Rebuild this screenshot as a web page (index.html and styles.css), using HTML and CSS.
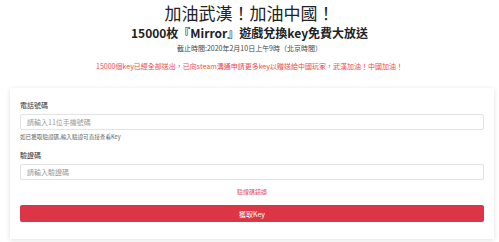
FILE: index.html
```html
<!DOCTYPE html>
<html lang="zh-Hant">
<head>
<meta charset="utf-8">
<title>加油武漢！加油中國！</title>
<link rel="stylesheet" href="styles.css">
</head>
<body>
<header class="head">
  <h1 class="title">加油武漢！加油中國！</h1>
  <h2 class="subtitle">15000枚『Mirror』遊戲兌換key免費大放送</h2>
  <p class="deadline">截止時間:2020年2月10日上午9時（北京時間）</p>
  <p class="notice">15000個key已經全部送出，已向steam溝通申請更多key以贈送給中國玩家，武漢加油！中國加油！</p>
</header>
<main class="card">
  <div class="field">
    <label class="label">電話號碼</label>
    <input class="input" type="text" placeholder="請輸入11位手機號碼">
    <small class="help">如已獲取驗證碼,輸入驗證可直接查看Key</small>
  </div>
  <div class="field">
    <label class="label">驗證碼</label>
    <input class="input" type="text" placeholder="請輸入驗證碼">
  </div>
  <p class="error">驗證碼錯誤</p>
  <button class="btn" type="button">獲取Key</button>
</main>
</body>
</html>
```

FILE: styles.css
```css
* { box-sizing: border-box; }
html, body { margin: 0; padding: 0; background: #fff; }
body {
  font-family: "Noto Sans CJK TC", "Noto Sans", sans-serif;
  color: #333;
  width: 499px;
  height: 242px;
  overflow: hidden;
}
.head {
  display: flex;
  flex-direction: column;
  align-items: center;
  padding-top: 2px;
}
.title {
  margin: 0;
  font-size: 17px;
  line-height: 22px;
  font-weight: 400;
  color: #222;
}
.subtitle {
  margin: 1px 0 0;
  font-size: 12px;
  line-height: 16px;
  font-weight: 700;
  color: #222;
}
.deadline {
  margin: 2px 0 0;
  font-size: 7px;
  line-height: 10px;
  color: #444;
}
.notice {
  margin: 8px 0 0;
  font-size: 7px;
  line-height: 10px;
  color: #ef4b4b;
}
.card {
  margin: 17px 0 0 10px;
  width: 484px;
  height: 151px;
  background: #fff;
  box-shadow: 0 1px 5px rgba(0,0,0,0.12);
  padding: 10px 10px 0;
  display: flex;
  flex-direction: column;
}
.field {
  display: flex;
  flex-direction: column;
}
.label {
  font-size: 7px;
  line-height: 10px;
  margin-top: 2px;
  color: #333;
}
.input {
  margin-top: 4px;
  height: 16px;
  border: 1px solid #e3e3e3;
  border-radius: 2px;
  padding: 0 6px;
  font-family: inherit;
  font-size: 7px;
  color: #333;
  outline: none;
}
.input::placeholder { color: #9a9a9a; }
.help {
  font-size: 5.6px;
  line-height: 8px;
  margin-top: 3px;
  color: #666;
}
.field + .field { margin-top: 7px; }
.error {
  margin: 8px 0 0;
  text-align: center;
  font-size: 6px;
  line-height: 8px;
  color: #e0505a;
}
.btn {
  margin-top: 9px;
  height: 17px;
  border: 0;
  border-radius: 2px;
  background: #dc3545;
  color: #fff;
  font-family: inherit;
  font-size: 7px;
  padding: 0;
}
```
